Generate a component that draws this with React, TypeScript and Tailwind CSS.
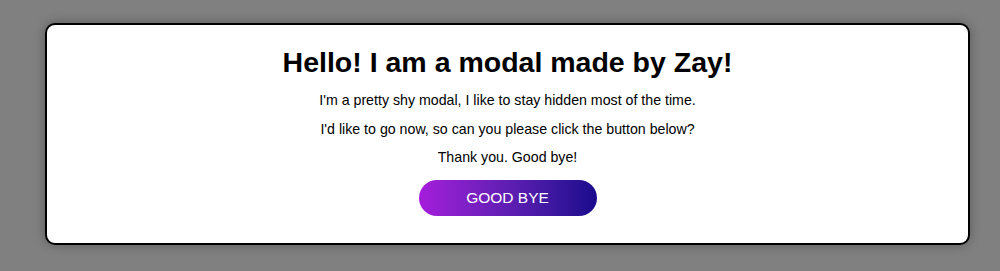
export default function App() {
  return (
    <main className="min-h-[271px] bg-[#808080] pt-[23px] pl-[45px] pr-[30px] font-['Liberation_Sans',Arial,sans-serif]">
      {/* Modal */}
      <section className="h-[222px] bg-white border-2 border-black rounded-[10px] shadow-[0_0_12px_rgba(0,0,0,0.3)] flex flex-col items-center pt-[20px] text-black">
        <h1 className="text-[28.5px] font-bold leading-[34px] mb-[12px]">
          Hello! I am a modal made by Zay!
        </h1>
        <p className="text-[14.2px] leading-[18px] mb-[10.5px]">
          I'm a pretty shy modal, I like to stay hidden most of the time.
        </p>
        <p className="text-[14.2px] leading-[18px] mb-[10.5px]">
          I'd like to go now, so can you please click the button below?
        </p>
        <p className="text-[14.2px] leading-[18px] mb-[13.5px]">Thank you. Good bye!</p>
        <button className="w-[178px] h-[36px] rounded-full bg-gradient-to-r from-[#a51ddb] to-[#1a0a8c] text-white text-[15.5px]">
          GOOD BYE
        </button>
      </section>
    </main>
  );
}
